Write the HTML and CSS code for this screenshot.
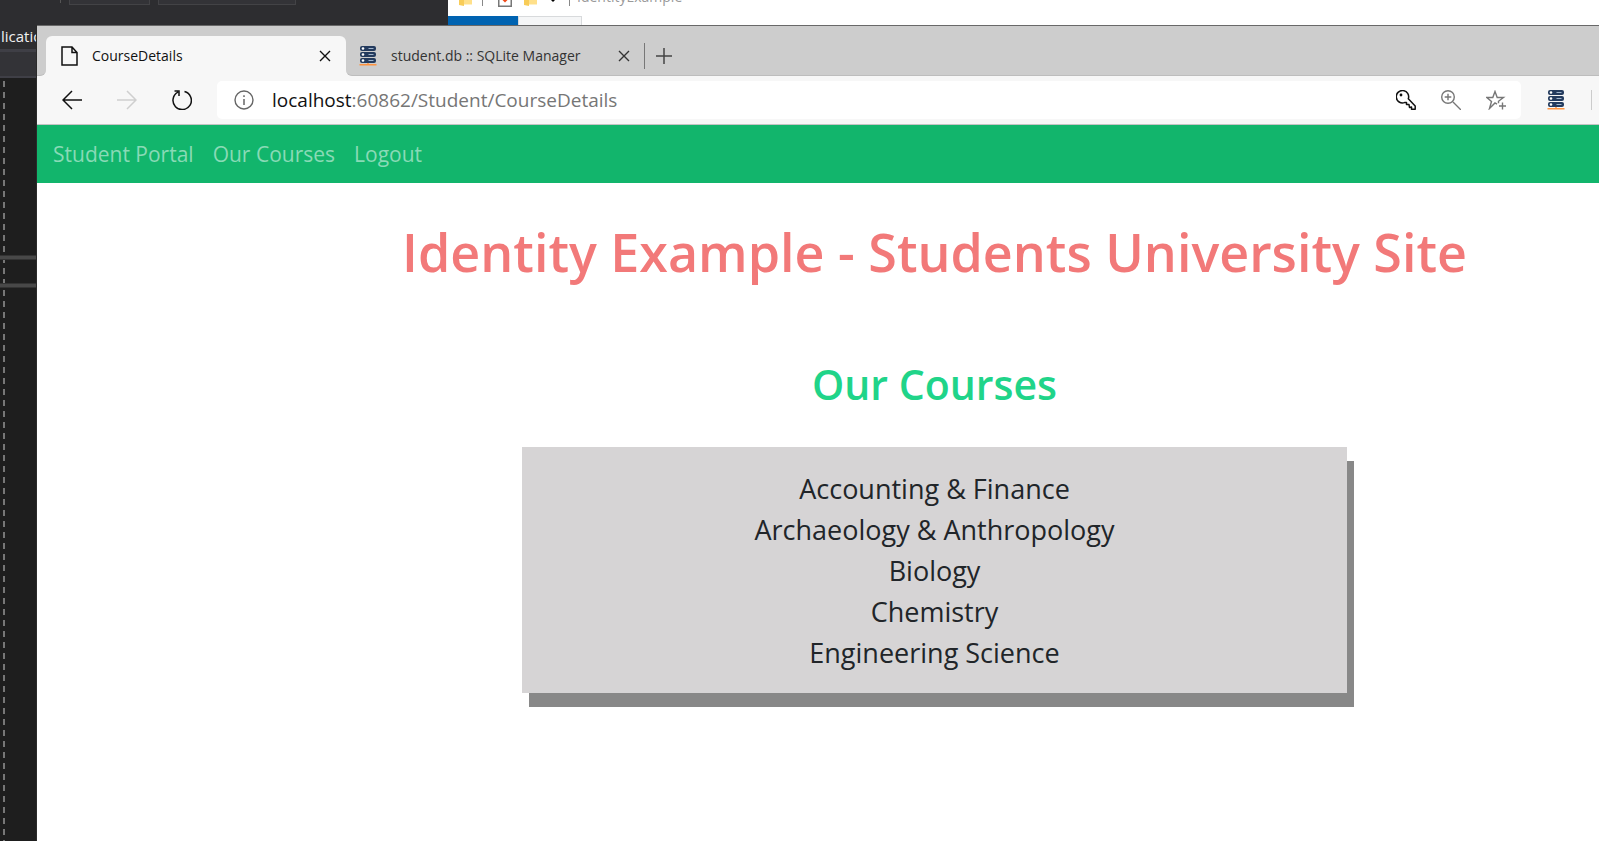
FILE: index.html
```html
<!DOCTYPE html>
<html lang="en">
<head>
<meta charset="utf-8">
<title>CourseDetails</title>
<link rel="stylesheet" href="styles.css">
</head>
<body>
<svg class="sprite" aria-hidden="true">
  <symbol id="server" viewBox="0 0 18 20">
    <rect x="1" y="0" width="16" height="5" rx="2" fill="#243b5e"/>
    <rect x="1" y="6" width="16" height="5" rx="2" fill="#243b5e"/>
    <rect x="1" y="12" width="16" height="5" rx="2" fill="#243b5e"/>
    <path d="M9.500 2.500h5M9.500 8.500h5M9.500 14.500h5" stroke="#9fb4cc"/>
    <circle cx="4" cy="2.500" r="1.300" fill="#fff"/><circle cx="4" cy="8.500" r="1.300" fill="#fff"/><circle cx="4" cy="14.500" r="1.300" fill="#fff"/>
    <path d="M.5 18.700h17M9 17v2" stroke="#ff9440" stroke-width="1.500"/>
  </symbol>
  <symbol id="folder" viewBox="0 0 13 6"><path d="M0 0h13v4.500H0z" fill="#ffe08a"/><path d="M0 0h5v6l-5-1z" fill="#f8cc58"/></symbol>
  <symbol id="cross" viewBox="0 0 12 12"><path d="M1 1l10 10M11 1L1 11" fill="none" stroke="currentColor" stroke-width="1.400"/></symbol>
</svg>
<div class="desktop">
  <div class="backdrop">
    <div class="ide-top"><i class="ide-mark"></i><i class="ide-box"></i><i class="ide-box ide-box-wide"></i></div>
    <div class="explorer">
      <div class="explorer-title">
        <svg class="folder"><use href="#folder"/></svg>
        <i class="bar"></i>
        <svg class="check" viewBox="0 0 14 7"><path d="M.75 0v6.250h12.500V0" fill="#fff" stroke="#777" stroke-width="1.500"/><path d="M4.500 0L7 2.500 9.500 0z" fill="#f04a1a"/></svg>
        <svg class="folder"><use href="#folder"/></svg>
        <svg class="caret" viewBox="0 0 4 3"><path d="M0 0h4L2 2z"/></svg>
        <i class="bar"></i>
        <span class="explorer-name">IdentityExample</span>
      </div>
      <div class="explorer-tabs"><i class="file-tab"></i><i class="home-tab"></i></div>
    </div>
  </div>
  <div class="lower">
    <div class="ide-side">
      <div class="ide-label">lication</div>
      <div class="ide-tool"></div>
      <div class="ide-canvas"><i class="rail"></i><i class="rail"></i></div>
    </div>
    <div class="browser">
      <header>
        <div class="tabs">
          <i class="strip-left"></i>
          <div class="tab active">
            <svg class="doc" viewBox="0 0 17 20"><path d="M1 1h10l5 5.500V19H1zM11 1v5.500h5" fill="none" stroke="#111" stroke-width="1.500"/></svg>
            <span>CourseDetails</span>
            <button class="close" aria-label="Close CourseDetails"><svg><use href="#cross"/></svg></button>
          </div>
          <div class="strip-right">
            <div class="tab">
              <svg class="server"><use href="#server"/></svg>
              <span>student.db :: SQLite Manager</span>
              <button class="close" aria-label="Close student.db"><svg><use href="#cross"/></svg></button>
            </div>
            <i class="tab-divider"></i>
            <button class="new-tab" aria-label="New tab"><svg viewBox="0 0 18 18"><path d="M9 1v16M1 9h16" stroke="#444" stroke-width="1.500"/></svg></button>
          </div>
        </div>
        <div class="toolbar">
          <div class="nav-buttons">
            <button aria-label="Back"><svg viewBox="0 0 20 20"><path d="M20 10H1M10 1L1 10l9 9" fill="none" stroke="#111" stroke-width="1.500"/></svg></button>
            <button aria-label="Forward" disabled><svg viewBox="0 0 20 20"><path d="M0 10h19M10 1l9 9-9 9" fill="none" stroke="#cfcfcf" stroke-width="1.500"/></svg></button>
            <button aria-label="Refresh"><svg viewBox="0 0 20 20"><path d="M12.500 1.500A9.200 9.200 0 1 1 6 2.200M2.500 1H7v5" fill="none" stroke="#111" stroke-width="1.500"/></svg></button>
          </div>
          <div class="address">
            <svg class="icon" viewBox="0 0 20 20"><circle cx="10" cy="10" r="9" fill="none" stroke="#666" stroke-width="1.400"/><path d="M10 9v6M10 5.200v1.700" stroke="#666" stroke-width="1.500"/></svg>
            <div class="url"><b>localhost</b>:60862/Student/CourseDetails</div>
            <div class="actions">
              <button aria-label="Passwords"><svg viewBox="0 0 20 20"><path d="M12.300 8.800A6.200 6.200 0 1 0 8.500 12.600L10.500 12.500V14.500H13L13.500 17.500L15.500 17V19.200H19.200V16z" fill="none" stroke="#111" stroke-width="1.500" stroke-linejoin="round"/><circle cx="5" cy="5" r="1.400" fill="#111"/></svg></button>
              <button aria-label="Zoom"><svg viewBox="0 0 20 20"><path d="M12 12l8 8M7 3.700v6.600M3.700 7h6.600" fill="none" stroke="#777" stroke-width="1.400"/><circle cx="7" cy="7" r="6.300" fill="none" stroke="#777" stroke-width="1.400"/></svg></button>
              <button aria-label="Add to favourites"><svg viewBox="0 0 20 20"><path d="M11 14.200L9 13l-5.500 5.500 2-7L.8 7.500h6L9 1.500l2.200 6h6.300L12.500 11.300v2M16.500 12.500v7M13 16h7" fill="none" stroke="#777" stroke-width="1.400"/></svg></button>
            </div>
          </div>
          <button class="extension" aria-label="SQLite Manager"><svg class="server"><use href="#server"/></svg></button>
          <i class="tool-divider"></i>
        </div>
      </header>
      <div class="page">
        <nav>
          <a href="#">Student Portal</a>
          <a href="#">Our Courses</a>
          <a href="#">Logout</a>
        </nav>
        <main>
          <h1>Identity Example - Students University Site</h1>
          <h2>Our Courses</h2>
          <ul>
            <li>Accounting &amp; Finance</li>
            <li>Archaeology &amp; Anthropology</li>
            <li>Biology</li>
            <li>Chemistry</li>
            <li>Engineering Science</li>
          </ul>
        </main>
      </div>
    </div>
  </div>
</div>
</body>
</html>
```
FILE: styles.css
```css
* { box-sizing: border-box; }
body {
  margin: 0;
  overflow: hidden;
  font-family: "Open Sans", "Noto Sans", sans-serif;
  color: #212529;
  background: #fff;
}
svg { display: block; }
button {
  padding: 0;
  border: 0;
  background: none;
  color: inherit;
}
.sprite { position: absolute; width: 0; height: 0; }
.desktop { display: flex; flex-direction: column; height: 100vh; overflow: hidden; }

/* windows behind the browser */
.backdrop { display: flex; height: 25px; overflow: hidden; }
.ide-top { display: flex; align-items: flex-start; width: 448px; padding-left: 60px; background: #2d2d30; }
.ide-mark { width: 1px; height: 3px; margin-right: 8px; background: #555; }
.ide-box { width: 81px; height: 5px; margin-right: 8px; border: 1px solid #434346; border-top: 0; background: #333337; }
.ide-box-wide { width: 138px; }
.explorer { flex: 1; background: #fff; }
.explorer-title { display: flex; align-items: flex-start; height: 16px; padding-left: 11px; }
.folder { width: 13px; height: 6px; }
.bar { width: 1px; height: 6px; margin: 0 15px 0 10px; background: #888; }
.check { width: 14px; height: 7px; margin-right: 12px; }
.caret { width: 4px; height: 3px; margin-left: 14px; }
.caret + .bar { margin: 0 7px 0 14px; }
.explorer-name { margin-top: -12px; font-size: 14px; line-height: 18px; color: #999; }
.explorer-tabs { display: flex; height: 9px; }
.file-tab { width: 70px; background: #0063b1; }
.home-tab { width: 64px; border: 1px solid #d8dadc; border-bottom: 0; background: #f5f6f7; }

.lower { display: flex; flex: 1; min-height: 0; }
.ide-side { display: flex; flex-direction: column; width: 37px; overflow: hidden; background: #1e1e1e; border-right: 1px solid #2b2b2b; }
.ide-label { height: 24px; padding-left: 1px; overflow: hidden; font-size: 15px; line-height: 23px; color: #f1f1f1; background: #2d2d30; }
.ide-tool { height: 29px; border-top: 3px solid #3f3f46; border-bottom: 2px solid #3f3f46; background: #333337; }
.ide-canvas {
  display: flex;
  flex: 1;
  flex-direction: column;
  gap: 23px;
  padding-top: 177px;
  background: repeating-linear-gradient(#1e1e1e 0 3px, #777 3px 9px, #1e1e1e 9px 11px) 3px 0 / 2px 100% no-repeat;
}
.rail { height: 5px; border: 1px solid #333; border-width: 1px 0; background: #484848; }

/* browser chrome */
.browser { display: flex; flex: 1; flex-direction: column; min-width: 0; overflow: hidden; border-top: 1px solid #686868; background: #fff; }
header { color: #111; background: #f7f7f7; border-bottom: 1px solid #c4c4c4; }
.tabs { display: flex; border-top: 10px solid #cdcdcd; background: linear-gradient(#cdcdcd 50%, #f7f7f7 50%); }
.strip-left { width: 9px; border-bottom: 1px solid #bdbdbd; border-bottom-right-radius: 6px; background: #cdcdcd; }
.strip-right { display: flex; flex: 1; align-items: center; border-bottom: 1px solid #bdbdbd; border-bottom-left-radius: 6px; background: #cdcdcd; }
.tab { display: flex; align-items: center; width: 298px; height: 39px; padding: 0 14px 0 13px; font-size: 14px; line-height: 20px; color: #333; }
.tab.active { width: 300px; padding: 0 15px; border-radius: 6px 6px 0 0; background: #f7f7f7; color: #111; }
.tab span { flex: 1; padding-left: 14px; white-space: nowrap; }
.doc { width: 17px; height: 20px; }
.server { width: 18px; height: 20px; }
.close svg, .close { width: 12px; height: 12px; }
.tab-divider { width: 1px; height: 26px; margin-right: 10px; background: #777; }
.new-tab svg { width: 18px; height: 18px; }
.toolbar { display: flex; align-items: center; height: 48px; padding: 0 7px 1px 25px; }
.nav-buttons { display: flex; gap: 35px; margin-right: 25px; }
.nav-buttons svg, .actions svg, .icon { width: 20px; height: 20px; }
.address { display: flex; flex: 1; align-items: center; height: 38px; padding: 0 15px 0 17px; border-radius: 5px; background: #fff; }
.url { flex: 1; padding-left: 18px; font-size: 19px; line-height: 28px; color: #767676; }
.url b { font-weight: 400; color: #111; }
.actions { display: flex; gap: 25px; }
.extension { margin: 0 26px 0 26px; }
.tool-divider { width: 1px; height: 20px; background: #ccc; }

/* the web page runs past the right edge of the screen */
.page { margin-right: -233px; }
nav { display: flex; gap: 19px; align-items: center; height: 58px; padding: 0 16px; background: #12b56c; }
nav a { font-size: 21px; line-height: 32px; color: #89dab6; text-decoration: none; }
main { display: flex; flex-direction: column; align-items: center; padding-top: 35px; }
h1, h2 { margin: 0; font-weight: 600; white-space: nowrap; }
h1 { font-size: 52px; line-height: 68px; color: #f27979; }
h2 { margin-top: 72px; font-size: 41px; line-height: 52px; color: #20d489; }
ul { width: 46%; margin: 37px 0 0; padding: 21px 0 20px; list-style: none; text-align: center; background: #d6d4d5; box-shadow: 7px 14px #888; }
li { font-size: 27px; line-height: 41px; }
```
